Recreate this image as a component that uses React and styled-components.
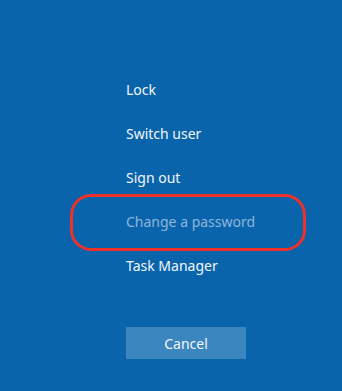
import styled, { createGlobalStyle } from "styled-components";

const GlobalStyle = createGlobalStyle`
  html, body {
    margin: 0;
    padding: 0;
    background: #0a64ab;
  }
`;

const options = [
  { label: "Lock" },
  { label: "Switch user" },
  { label: "Sign out" },
  { label: "Change a password", muted: true, marked: true },
  { label: "Task Manager" },
];

export default function App() {
  return (
    <>
      <GlobalStyle />
      <Screen>
        <Menu>
          {options.map((o) => (
            <Option key={o.label} $muted={o.muted} $marked={o.marked}>
              {o.label}
            </Option>
          ))}
        </Menu>
        <CancelButton>Cancel</CancelButton>
      </Screen>
    </>
  );
}

const Screen = styled.main`
  width: 342px;
  height: 391px;
  background: #0a64ab;
  box-sizing: border-box;
  padding: 67px 0 0 126px;
  display: flex;
  flex-direction: column;
  font-family: "Segoe UI", "Noto Sans", "Open Sans", sans-serif;
`;

const Menu = styled.ul`
  list-style: none;
  margin: 0;
  padding: 0;
  display: flex;
  flex-direction: column;
`;

const Option = styled.li`
  position: relative;
  height: 44px;
  display: flex;
  align-items: center;
  font-size: 14px;
  color: ${(p) => (p.$muted ? "#8db6dc" : "#f2f6fa")};
  cursor: default;

  ${(p) =>
    p.$marked &&
    `
    &::after {
      content: "";
      position: absolute;
      left: -56px;
      top: -5px;
      width: 230px;
      height: 51px;
      border: 3px solid #f0302a;
      border-radius: 21px;
    }
  `}
`;

const CancelButton = styled.button`
  margin-top: 40px;
  width: 120px;
  height: 32px;
  border: none;
  background: #3b86bf;
  color: #f2f6fa;
  font-family: inherit;
  font-size: 14px;
  padding: 0;
`;
